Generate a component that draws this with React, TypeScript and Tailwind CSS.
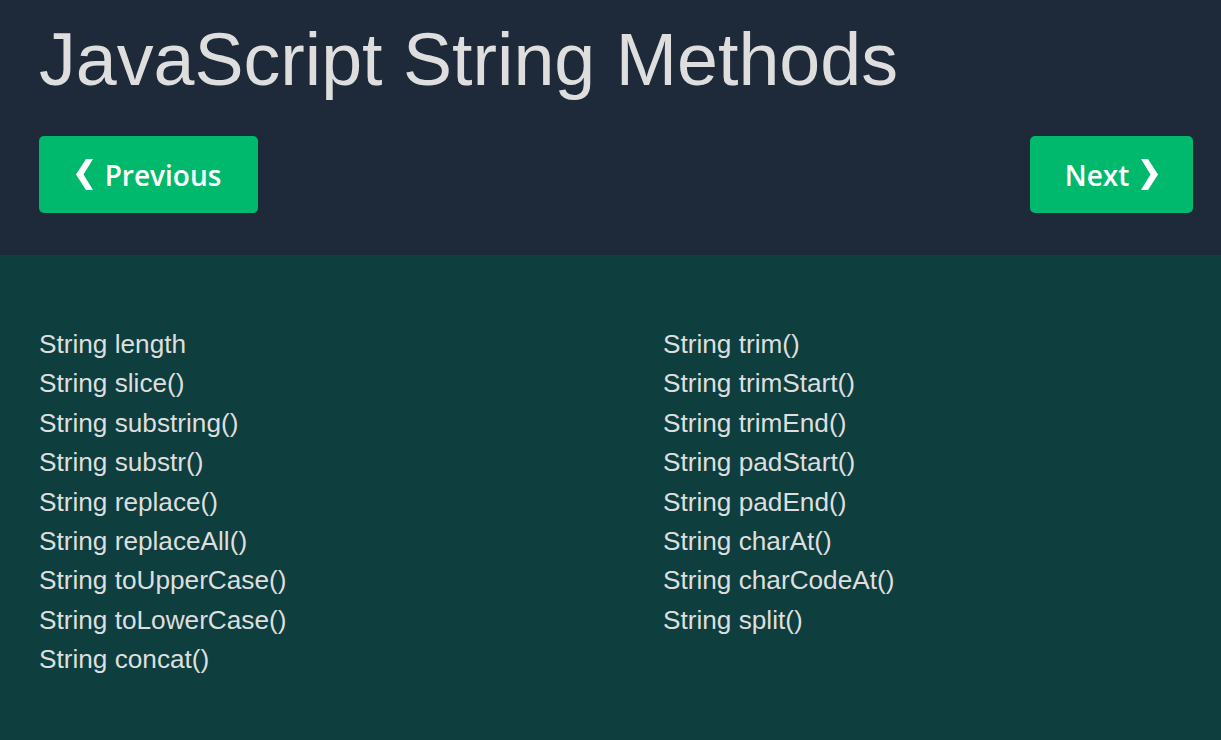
import React from 'react';

const leftItems = [
  'String length',
  'String slice()',
  'String substring()',
  'String substr()',
  'String replace()',
  'String replaceAll()',
  'String toUpperCase()',
  'String toLowerCase()',
  'String concat()',
];

const rightItems = [
  'String trim()',
  'String trimStart()',
  'String trimEnd()',
  'String padStart()',
  'String padEnd()',
  'String charAt()',
  'String charCodeAt()',
  'String split()',
];

const Chevron = ({ dir }: { dir: 'left' | 'right' }) => (
  <svg width="17" height="31" viewBox="0 0 17 31" className="shrink-0">
    {dir === 'left' ? (
      <polygon points="10,0 17,0 7.5,15.5 17,31 10,31 0,15.5" fill="#ffffff" />
    ) : (
      <polygon points="0,0 7,0 17,15.5 7,31 0,31 9.5,15.5" fill="#ffffff" />
    )}
  </svg>
);

export default function App() {
  return (
    <div className="min-h-[740px] flex flex-col" style={{ fontFamily: '"Liberation Sans", Arial, sans-serif' }}>
      {/* Header */}
      <header className="bg-[#1e2a3a] pl-[39px] pr-[28px] pt-[24px] pb-[42px]">
        <h1 className="text-[73.6px] leading-[72px] text-[#dedede] font-normal">
          JavaScript String Methods
        </h1>
        <div className="mt-[40px] flex items-center justify-between">
          <button
            className="h-[77px] w-[219px] rounded-[5px] bg-[#00b96c] flex items-center justify-center gap-[12px] text-white text-[28px] font-semibold"
            style={{ fontFamily: '"Open Sans", "Noto Sans", sans-serif' }}
          >
            <Chevron dir="left" />
            <span className="leading-none">Previous</span>
          </button>
          <button
            className="h-[77px] w-[163px] rounded-[5px] bg-[#00b96c] flex items-center justify-center gap-[12px] text-white text-[28px] font-semibold"
            style={{ fontFamily: '"Open Sans", "Noto Sans", sans-serif' }}
          >
            <span className="leading-none">Next</span>
            <Chevron dir="right" />
          </button>
        </div>
      </header>

      {/* Method list */}
      <main className="flex-1 bg-[#0e3e3e] px-[39px] pt-[70px] pb-[40px]">
        <div className="grid grid-cols-[624px_1fr] text-[26.2px] leading-[39.4px] text-[#dedede]">
          <ul>
            {leftItems.map((item) => (
              <li key={item}>{item}</li>
            ))}
          </ul>
          <ul>
            {rightItems.map((item) => (
              <li key={item}>{item}</li>
            ))}
          </ul>
        </div>
      </main>
    </div>
  );
}
